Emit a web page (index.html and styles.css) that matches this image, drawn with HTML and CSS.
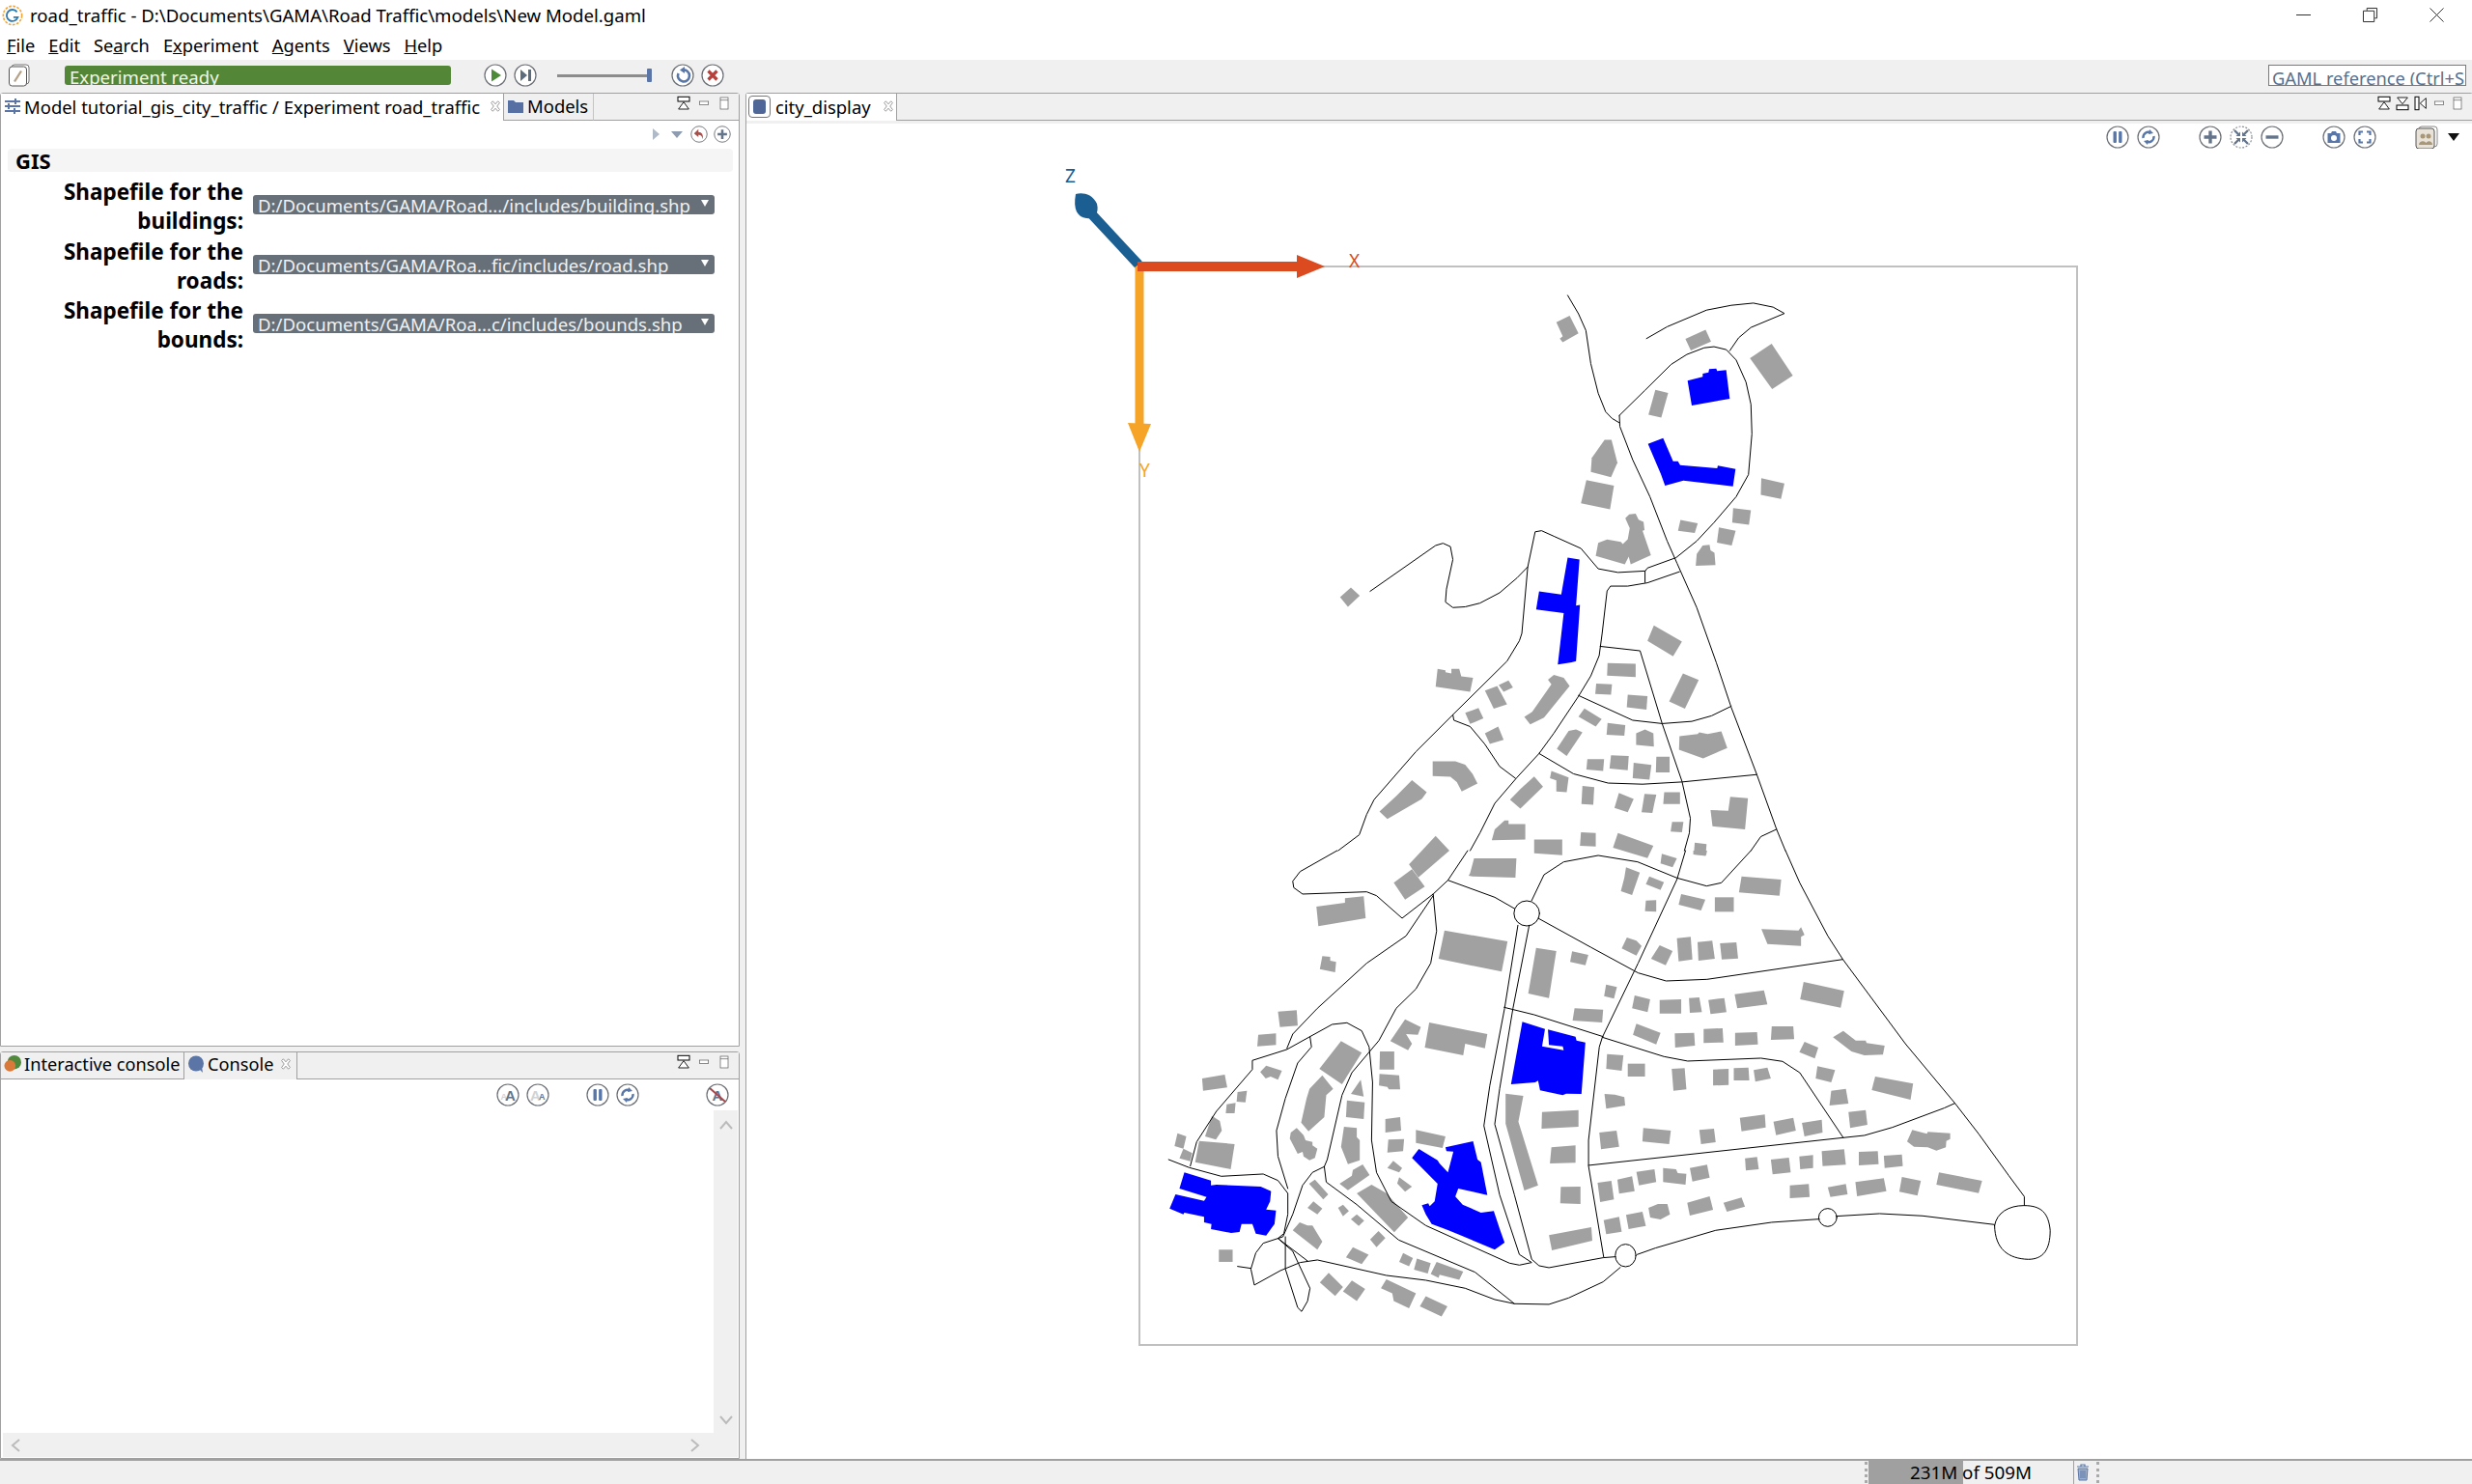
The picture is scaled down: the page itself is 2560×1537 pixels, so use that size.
FILE: index.html
```html
<!DOCTYPE html>
<html lang="en">
<head>
<meta charset="utf-8">
<title>road_traffic</title>
<link rel="stylesheet" href="styles.css">
</head>
<body>
<svg class="defs" aria-hidden="true">
  <symbol id="ring" viewBox="0 0 24 24"><circle cx="12" cy="12" r="11" fill="#fff" stroke="#6b6f75" stroke-width="1.2"/></symbol>
  <symbol id="i-play" viewBox="0 0 24 24"><use href="#ring"/><path d="M8 5.5 18 12 8 18.5z" fill="#4c8a38"/></symbol>
  <symbol id="i-step" viewBox="0 0 24 24"><use href="#ring"/><path d="M7 6 14 12 7 18z" fill="#5d6c7c"/><rect x="15" y="6" width="3" height="12" fill="#5d6c7c"/></symbol>
  <symbol id="i-reload" viewBox="0 0 24 24"><use href="#ring"/><path d="M7.5 10a6 6 0 1 0 4.5-3.5" fill="none" stroke="#5877a8" stroke-width="2.6"/><path d="M14 3v7l-5-3.500z" fill="#5877a8"/></symbol>
  <symbol id="i-stop" viewBox="0 0 24 24"><use href="#ring"/><path d="M7.500 7.500 16.500 16.500M16.500 7.500 7.500 16.500" stroke="#b8403a" stroke-width="3.200"/></symbol>
  <symbol id="i-pause" viewBox="0 0 24 24"><use href="#ring"/><rect x="7.500" y="6" width="3.400" height="12" rx="1" fill="#5877a8"/><rect x="13.100" y="6" width="3.400" height="12" rx="1" fill="#5877a8"/></symbol>
  <symbol id="i-sync" viewBox="0 0 24 24"><use href="#ring"/><path d="M6.500 13a5.500 5.500 0 0 1 8-5.500M17.500 11a5.500 5.500 0 0 1-8 5.500" fill="none" stroke="#5877a8" stroke-width="2.400"/><path d="M13 4l4 4-5 1zM11 20l-4-4 5-1z" fill="#5877a8"/></symbol>
  <symbol id="i-plus" viewBox="0 0 24 24"><use href="#ring"/><path d="M12 5.500v13M5.500 12h13" stroke="#64748a" stroke-width="3.400"/></symbol>
  <symbol id="i-minus" viewBox="0 0 24 24"><use href="#ring"/><path d="M5.500 12h13" stroke="#64748a" stroke-width="3.400"/></symbol>
  <symbol id="i-fit" viewBox="0 0 24 24"><circle cx="12" cy="12" r="11" fill="#fff" stroke="#8a8d92" stroke-width="1.200" stroke-dasharray="2 1.500"/><path d="M5 5l5 5M19 5l-5 5M5 19l5-5M19 19l-5-5" stroke="#64748a" stroke-width="2.400"/><path d="M11 11H6.500L11 6.500zM13 11h4.500L13 6.500zM11 13H6.500l4.500 4.500zM13 13h4.500L13 17.500z" fill="#64748a"/></symbol>
  <symbol id="i-cam" viewBox="0 0 24 24"><use href="#ring"/><path d="M5.500 8h3.500l1-2h4l1 2h3.500v10h-13z" fill="#5877a8"/><circle cx="12" cy="13" r="3" fill="#fff"/></symbol>
  <symbol id="i-full" viewBox="0 0 24 24"><use href="#ring"/><path d="M6.500 10V6.500H10M14 6.500h3.500V10M17.500 14v3.500H14M10 17.500H6.500V14" fill="none" stroke="#5877a8" stroke-width="2.200"/></symbol>
  <symbol id="v-min" viewBox="0 0 24 24"><rect x="5" y="9" width="14" height="5" fill="#fff" stroke="#555"/></symbol>
  <symbol id="v-max" viewBox="0 0 24 24"><rect x="6" y="3" width="12" height="18" fill="#fff" stroke="#555"/><path d="M6 7h12" stroke="#555"/></symbol>
  <symbol id="v-horiz" viewBox="0 0 24 24"><rect x="3" y="2" width="18" height="7" fill="#fff" stroke="#111" stroke-width="1.600"/><path d="M12 10 20 21H4z" fill="#fff" stroke="#111" stroke-width="1.400"/></symbol>
  <symbol id="v-horiz2" viewBox="0 0 24 24"><path d="M12 13 4 3h16z" fill="#fff" stroke="#111" stroke-width="1.400"/><rect x="3" y="15" width="18" height="7" fill="#fff" stroke="#111" stroke-width="1.600"/></symbol>
  <symbol id="v-vert" viewBox="0 0 24 24"><rect x="3" y="2" width="6" height="20" fill="#fff" stroke="#111" stroke-width="1.600"/><path d="M11 12 20 4v16z" fill="#fff" stroke="#111" stroke-width="1.400"/></symbol>
  <symbol id="i-close" viewBox="0 0 16 16"><path d="M3 4 5 2 8 5.500 11 2 13 4 10 8 13 12 11 14 8 10.500 5 14 3 12 6 8z" fill="#fff" stroke="#8a8a8a"/></symbol>
</svg>

<header class="titlebar">
  <svg class="logo" viewBox="0 0 24 24"><circle cx="12" cy="12" r="10.500" fill="none" stroke="#f2a73b" stroke-width="1.800" stroke-dasharray="3 1.500"/><path d="M17 8a6.500 6.500 0 1 0 1 6h-5" fill="none" stroke="#2d7bb0" stroke-width="2"/></svg>
  <span class="title-text">road_traffic - D:\Documents\GAMA\Road Traffic\models\New Model.gaml</span>
  <div class="win-controls">
    <svg viewBox="0 0 16 16"><path d="M0 8h16" stroke="#222"/></svg>
    <svg viewBox="0 0 16 16"><path d="M4.500 3V.500h11v11H13M.500 3.500h12v12H.500z" fill="none" stroke="#222"/></svg>
    <svg viewBox="0 0 16 16"><path d="M.500.500 15.500 15.500M15.500.500.500 15.500" stroke="#222"/></svg>
  </div>
</header>

<nav class="menubar">
  <span><u>F</u>ile</span><span><u>E</u>dit</span><span>Se<u>a</u>rch</span><span>E<u>x</u>periment</span><span><u>A</u>gents</span><span><u>V</u>iews</span><span><u>H</u>elp</span>
</nav>

<div class="toolbar">
  <svg class="tb-edit" viewBox="0 0 24 24"><rect x="4" y="1" width="18" height="20" rx="3" fill="#fff" stroke="#777"/><rect x="1.500" y="3" width="18" height="20" rx="3" fill="#fff" stroke="#555"/><path d="M6 18 13 7l2 1-7 11z" fill="#b5a288"/></svg>
  <div class="status-pill">Experiment ready</div>
  <div class="tb-group">
    <svg class="ic"><use href="#i-play"/></svg>
    <svg class="ic"><use href="#i-step"/></svg>
  </div>
  <div class="speed"><span class="speed-thumb"></span></div>
  <div class="tb-group">
    <svg class="ic"><use href="#i-reload"/></svg>
    <svg class="ic"><use href="#i-stop"/></svg>
  </div>
  <div class="search-box">GAML reference (Ctrl+S</div>
</div>

<main class="workspace">
  <div class="left-col">
    <section class="pane pane-params">
      <div class="tabbar">
        <div class="tab tab-active tab-params">
          <svg class="tab-ic" viewBox="0 0 18 18"><path d="M1 4h16M1 9h16M1 14h16" stroke="#5b76a6" stroke-width="2"/><path d="M12 1v6M5 6v6M11 11v6" stroke="#5b76a6" stroke-width="2"/></svg>
          <span>Model tutorial_gis_city_traffic / Experiment road_traffic</span>
          <svg class="tab-x"><use href="#i-close"/></svg>
        </div>
        <div class="tab tab-models">
          <svg class="tab-ic" viewBox="0 0 18 18"><path d="M1 3h6l2 2h8v11H1z" fill="#5670a3"/></svg>
          <span>Models</span>
        </div>
        <div class="view-ctl">
          <svg><use href="#v-horiz"/></svg><svg><use href="#v-min"/></svg><svg><use href="#v-max"/></svg>
        </div>
      </div>
      <div class="params-tools">
        <svg viewBox="0 0 16 16"><path d="M5 2l7 6-7 6z" fill="#b0bac6"/></svg>
        <svg viewBox="0 0 16 16"><path d="M2 5h12l-6 7z" fill="#8e9cb0"/></svg>
        <svg class="ic-sm" viewBox="0 0 24 24"><use href="#ring"/><path d="M11 5 5 11l6 5v-3c3 0 5 1 6 6 1-6-1-10-6-10z" fill="#a6504c"/></svg>
        <svg class="ic-sm" viewBox="0 0 24 24"><use href="#i-plus"/></svg>
      </div>
      <div class="section-head">GIS</div>
      <div class="form">
        <label>Shapefile for the buildings:</label>
        <div class="combo"><span>D:/Documents/GAMA/Road.../includes/building.shp</span><i></i></div>
        <label>Shapefile for the roads:</label>
        <div class="combo"><span>D:/Documents/GAMA/Roa...fic/includes/road.shp</span><i></i></div>
        <label>Shapefile for the bounds:</label>
        <div class="combo"><span>D:/Documents/GAMA/Roa...c/includes/bounds.shp</span><i></i></div>
      </div>
    </section>

    <section class="pane pane-console">
      <div class="tabbar">
        <div class="tab tab-inter">
          <svg class="tab-ic" viewBox="0 0 20 20"><circle cx="12" cy="8" r="8" fill="#4f8a3c"/><circle cx="7" cy="12" r="6.500" fill="#d9793a"/></svg>
          <span>Interactive console</span>
        </div>
        <div class="tab tab-console">
          <svg class="tab-ic" viewBox="0 0 18 18"><circle cx="9" cy="8.500" r="8" fill="#5b76a6"/><path d="M12 14l4 4-1-6z" fill="#5b76a6"/></svg>
          <span>Console</span>
          <svg class="tab-x"><use href="#i-close"/></svg>
        </div>
        <div class="view-ctl">
          <svg><use href="#v-horiz"/></svg><svg><use href="#v-min"/></svg><svg><use href="#v-max"/></svg>
        </div>
      </div>
      <div class="console-body">
        <div class="console-tools">
          <svg class="ic" viewBox="0 0 24 24"><use href="#ring"/><text x="4.500" y="17" class="ga ga-lt">A</text><text x="9" y="18" class="gb">A</text></svg>
          <svg class="ic gap-s" viewBox="0 0 24 24"><use href="#ring"/><text x="4" y="18" class="gb gb-lt">A</text><text x="13" y="17" class="ga">A</text></svg>
          <svg class="ic gap-m"><use href="#i-pause"/></svg>
          <svg class="ic gap-s"><use href="#i-sync"/></svg>
          <svg class="ic gap-l" viewBox="0 0 24 24"><use href="#ring"/><text x="6.500" y="18" class="gb">A</text><path d="M4 5 20 19" stroke="#a8464a" stroke-width="2"/></svg>
        </div>
        <div class="console-scrollarea">
          <div class="console-text"></div>
          <div class="vscroll">
            <svg viewBox="0 0 14 10"><path d="M1 9 7 2l6 7" fill="none" stroke="#bbb" stroke-width="2"/></svg>
            <svg viewBox="0 0 14 10"><path d="M1 1l6 7 6-7" fill="none" stroke="#bbb" stroke-width="2"/></svg>
          </div>
        </div>
        <div class="hscroll">
          <svg viewBox="0 0 10 14"><path d="M9 1 2 7l7 6" fill="none" stroke="#bbb" stroke-width="2"/></svg>
          <svg viewBox="0 0 10 14"><path d="M1 1l7 6-7 6" fill="none" stroke="#bbb" stroke-width="2"/></svg>
        </div>
      </div>
    </section>
  </div>

  <section class="pane pane-view">
    <div class="tabbar">
      <div class="tab tab-active tab-city">
        <span class="city-ic"><b></b></span>
        <span>city_display</span>
        <svg class="tab-x"><use href="#i-close"/></svg>
      </div>
      <div class="view-ctl view-ctl-5">
        <svg><use href="#v-horiz"/></svg><svg><use href="#v-horiz2"/></svg><svg><use href="#v-vert"/></svg><svg><use href="#v-min"/></svg><svg><use href="#v-max"/></svg>
      </div>
    </div>
    <div class="view-body">
      <div class="view-tools">
        <svg class="ic"><use href="#i-pause"/></svg>
        <svg class="ic t8"><use href="#i-sync"/></svg>
        <svg class="ic t30"><use href="#i-plus"/></svg>
        <svg class="ic t8"><use href="#i-fit"/></svg>
        <svg class="ic t8"><use href="#i-minus"/></svg>
        <svg class="ic t30"><use href="#i-cam"/></svg>
        <svg class="ic t8"><use href="#i-full"/></svg>
        <svg class="ic t30" viewBox="0 0 24 24"><rect x="4" y="1" width="19" height="21" rx="3" fill="#fff" stroke="#888"/><rect x="1" y="3" width="19" height="21" rx="3" fill="#e8e2d8" stroke="#555"/><circle cx="8" cy="11" r="2.500" fill="#a89878"/><circle cx="14" cy="11" r="2.500" fill="#a89878"/><path d="M4 20c0-5 8-5 8 0zM11 20c0-5 7-5 7 0z" fill="#a89878"/></svg>
        <svg class="drop" viewBox="0 0 12 8"><path d="M0 0h12L6 8z" fill="#111"/></svg>
      </div>
      <svg class="map" viewBox="773 127 1787 1384">
        <rect class="frame" x="1180" y="275" width="971" height="1117"/>

        <!-- upper part of the map -->
        <g transform="translate(1150 280) scale(.5102 .3827)">
          <g class="bld">
            <polygon points="905,138 932,120 950,168 918,192 912,182 918,176"/>
            <polygon points="1167,183 1208,158 1219,190 1178,214"/>
            <polygon points="1298,235 1342,196 1385,282 1343,319"/>
            <polygon points="1106,321 1132,329 1118,396 1092,388"/>
            <polygon points="1003,456 1017,456 1029,518 1016,557 975,543 977,505"/>
            <polygon points="966,565 1022,580 1014,644 955,628"/>
            <polygon points="1053,658 1066,656 1072,672 1082,678 1084,700 1080,702 1097,768 1056,793 1052,772 1044,793 985,770 990,735 1008,726 1036,732 1040,738 1050,725 1054,695 1045,668"/>
            <polygon points="1321,560 1368,574 1361,616 1320,605"/>
            <polygon points="1264,641 1300,647 1296,686 1262,680"/>
            <polygon points="1157,673 1192,682 1186,708 1152,702"/>
            <polygon points="1235,693 1269,702 1261,742 1231,734"/>
            <polygon points="1198,750 1202,742 1216,740 1218,755 1226,762 1228,795 1188,797 1190,765"/>
            <polygon points="466,882 488,856 506,878 482,908"/>
            <polygon points="1103,958 1160,1002 1142,1042 1090,1000"/>
            <polygon points="1162,1088 1194,1106 1166,1184 1134,1164"/>
            <polygon points="1009,1060 1066,1062 1066,1098 1008,1094"/>
            <polygon points="986,1116 1018,1118 1016,1146 984,1144"/>
            <polygon points="1050,1146 1090,1150 1088,1186 1048,1180"/>
            <polygon points="664,1076 680,1080 680,1085 692,1088 692,1076 708,1076 712,1096 736,1100 730,1138 660,1124"/>
            <polygon points="760,1135 785,1122 805,1172 778,1184"/>
            <polygon points="788,1120 808,1107 817,1126 798,1138"/>
            <polygon points="900,1092 920,1100 932,1122 880,1208 852,1226 840,1206 856,1192 895,1118 888,1105"/>
            <polygon points="720,1195 747,1182 757,1210 730,1225"/>
            <polygon points="760,1250 787,1232 798,1268 770,1279"/>
            <polygon points="962,1183 997,1212 985,1232 950,1205"/>
            <polygon points="1009,1222 1045,1228 1043,1257 1007,1254"/>
            <polygon points="1067,1250 1085,1240 1102,1250 1103,1286 1067,1282"/>
            <polygon points="930,1244 945,1240 958,1248 926,1312 906,1292"/>
            <polygon points="1155,1258 1192,1252 1195,1248 1212,1252 1240,1245 1252,1290 1203,1318 1154,1295"/>
            <polygon points="968,1320 1002,1320 1000,1352 966,1348"/>
            <polygon points="1016,1310 1052,1312 1050,1350 1013,1346"/>
            <polygon points="1062,1330 1098,1336 1094,1376 1060,1372"/>
            <polygon points="1108,1314 1135,1314 1135,1356 1107,1356"/>
            <polygon points="654,1326 700,1326 720,1335 735,1360 745,1386 713,1408 703,1382 690,1368 654,1366"/>
            <polygon points="612,1377 642,1410 632,1428 562,1482 546,1462 580,1420"/>
            <polygon points="895,1352 930,1370 926,1410 905,1408 905,1378 892,1372"/>
            <polygon points="860,1367 878,1395 832,1454 811,1430 833,1400"/>
            <polygon points="958,1393 982,1396 980,1444 956,1442"/>
            <polygon points="1032,1412 1062,1428 1050,1464 1023,1452"/>
            <polygon points="1084,1414 1108,1416 1104,1440 1100,1466 1078,1464"/>
            <polygon points="1124,1410 1156,1410 1156,1442 1122,1442"/>
            <polygon points="1218,1458 1254,1460 1258,1422 1294,1426 1288,1510 1222,1502"/>
            <polygon points="1140,1490 1163,1490 1160,1518 1137,1516"/>
            <polygon points="800,1486 808,1486 808,1496 842,1496 842,1538 774,1540 780,1510"/>
            <polygon points="860,1538 917,1538 917,1580 860,1575"/>
            <polygon points="955,1518 985,1520 985,1557 953,1555"/>
            <polygon points="1030,1520 1102,1555 1090,1588 1020,1560"/>
            <polygon points="1186,1546 1210,1550 1208,1582 1184,1578"/>
            <polygon points="660,1528 688,1568 625,1640 606,1605"/>
          </g>
          <g class="hi">
            <polygon points="928,775 952,780 945,905 953,903 945,1055 936,1058 908,1064 920,925 864,915 870,866 915,875"/>
          </g>
          <g class="road">
            <polyline points="928,65 950,115 965,160 975,250 990,330 1005,380 1018,398 1033,410"/>
            <polyline points="1033,390 1085,322 1138,252 1170,225 1205,207 1225,204 1250,212 1270,240 1290,300 1300,360 1302,440 1295,550 1270,610 1225,680 1190,730 1148,775 1090,803 1085,812 1085,842"/>
            <polyline points="1033,390 1034,420 1060,510 1095,610 1130,730 1150,790 1190,910 1230,1060 1260,1180 1312,1362 1352,1510 1370,1568"/>
            <polyline points="1088,182 1130,150 1210,105 1260,92 1305,86 1345,97 1368,114 1300,152 1275,180 1257,215"/>
            <polyline points="527,866 660,742 675,736 690,745 695,780 682,860 680,895 695,910 720,908 750,898 790,870 825,830 847,800"/>
            <polyline points="1085,811 1030,815 990,805 955,750 900,717 875,702 862,705 847,800 835,980 830,1000 805,1055 695,1200 620,1300 535,1430 520,1470 505,1525 462,1568"/>
            <polyline points="1155,813 1090,843 1050,852 1015,852 1008,865 998,980 992,1040 975,1095 950,1150 900,1250 870,1305 825,1370 780,1440 750,1520 730,1568"/>
            <polyline points="994,1015 1075,1027 1120,1225 1160,1380 1177,1480 1175,1520 1165,1568"/>
            <polyline points="950,1148 1060,1215 1120,1224 1180,1218 1220,1203 1260,1177"/>
            <polyline points="870,1305 940,1360 1010,1385 1080,1388 1160,1382 1312,1362"/>
            <polyline points="695,1200 697,1215 730,1232 760,1280 790,1340 822,1372"/>
            <polyline points="1352,1510 1320,1530 1300,1568"/>
          </g>
        </g>

        <!-- top-right blue buildings -->
        <g transform="translate(1600 280) scale(.3333)">
          <g class="hi">
            <polygon points="443,340 490,328 490,318 508,314 510,304 532,302 535,310 563,307 574,396 456,417"/>
            <polygon points="320,536 367,518 398,590 413,590 420,602 535,612 537,604 592,614 584,668 430,650 373,666 360,630"/>
          </g>
        </g>

        <!-- lower left part -->
        <g transform="translate(1150 880) scale(.5102 .3333)">
          <g class="bld">
            <polygon points="738,24 824,24 822,84 735,80 727,78 730,70"/>
            <polygon points="575,100 612,58 638,112 598,152"/>
            <polygon points="418,174 476,162 476,148 514,142 518,210 486,218 422,235"/>
            <polygon points="430,328 446,330 446,342 458,346 456,378 425,368"/>
            <polygon points="678,248 806,282 794,376 666,336"/>
            <polygon points="864,302 905,312 890,458 848,444"/>
            <polygon points="937,313 970,324 964,356 933,346"/>
            <polygon points="1006,416 1028,424 1022,460 1002,452"/>
            <polygon points="942,490 1000,494 998,534 938,528"/>
            <polygon points="340,500 378,496 380,544 344,548"/>
            <polygon points="300,572 336,568 336,604 298,608"/>
            <polygon points="598,524 630,548 624,572 600,570 612,600 604,620 568,592"/>
            <polygon points="647,534 765,570 760,614 720,600 716,636 638,612"/>
            <polygon points="547,624 576,624 576,680 546,680"/>
            <polygon points="546,694 586,698 588,742 565,742 562,734 545,730"/>
            <polygon points="304,688 316,668 348,684 340,712 325,702 315,708"/>
            <polygon points="186,708 232,696 237,736 188,746"/>
            <polygon points="468,592 510,628 470,726 424,678"/>
            <polygon points="430,698 452,740 438,760 434,828 402,872 387,845 398,770 404,740"/>
            <polygon points="508,712 514,764 488,756"/>
            <polygon points="480,776 516,782 514,834 478,828"/>
            <polygon points="258,750 277,746 274,782 256,780"/>
            <polygon points="236,788 254,784 252,816 234,816"/>
            <polygon points="206,824 222,840 226,870 214,898 192,888"/>
            <polygon points="136,878 154,888 148,926 130,918"/>
            <polygon points="148,926 166,940 162,965 140,956"/>
            <polygon points="180,902 252,912 244,990 172,968"/>
            <polygon points="366,876 378,862 392,884 396,900 410,905 410,916 420,926 415,955 404,962 392,950 390,936 380,942 364,895"/>
            <polygon points="474,858 500,862 500,890 506,900 506,962 482,974 468,920"/>
            <polygon points="558,834 588,828 590,870 558,876"/>
            <polygon points="564,898 596,896 594,934 562,938"/>
            <polygon points="620,868 680,888 674,924 620,908"/>
            <polygon points="574,964 592,986 586,1000 562,986"/>
            <polygon points="492,992 512,975 526,1008 482,1055 465,1035 490,1010"/>
            <polygon points="586,1015 612,1044 598,1060 582,1034"/>
            <polygon points="403,1035 415,1022 442,1068 432,1084"/>
            <polygon points="400,1110 412,1090 430,1112 420,1130"/>
            <polygon points="462,1110 472,1100 484,1120 472,1136"/>
            <polygon points="488,1145 500,1130 515,1150 504,1166"/>
            <polygon points="530,1038 560,1064 604,1140 576,1186 500,1065"/>
            <polygon points="370,1180 384,1155 400,1165 410,1165 430,1215 420,1240"/>
            <polygon points="220,1240 248,1240 248,1278 220,1278"/>
            <polygon points="527,1208 544,1182 558,1204 540,1232"/>
            <polygon points="492,1232 524,1256 510,1285 478,1264"/>
            <polygon points="594,1250 614,1266 606,1292 586,1278"/>
            <polygon points="622,1268 650,1282 644,1314 616,1302"/>
            <polygon points="662,1278 716,1308 708,1334 668,1318 666,1328 650,1316"/>
            <polygon points="443,1312 472,1356 456,1384 425,1342"/>
            <polygon points="490,1336 517,1362 500,1400 472,1370"/>
            <polygon points="560,1332 620,1376 606,1422 575,1400 572,1376 549,1360"/>
            <polygon points="640,1385 684,1416 672,1448 628,1416"/>
            <polygon points="802,755 838,762 828,842 868,1040 840,1056 802,848"/>
            <polygon points="876,812 950,806 950,858 875,864"/>
            <polygon points="895,922 944,916 944,970 892,972"/>
            <polygon points="914,1045 954,1044 954,1098 913,1096"/>
            <polygon points="890,1195 976,1170 978,1212 896,1242"/>
          </g>
          <g class="hi">
            <polygon points="150,1000 204,1025 204,1040 215,1038 305,1044 326,1058 324,1090 316,1115 336,1118 333,1160 316,1196 295,1190 288,1160 266,1160 262,1185 245,1188 204,1176 205,1160 190,1155 190,1138 150,1125 148,1130 120,1112 132,1068 190,1088 195,1076 140,1050"/>
            <polygon points="626,927 664,962 668,972 685,1000 696,935 682,934 680,922 736,903 745,960 752,968 765,1070 758,1068 706,1050 700,1075 715,1100 752,1125 778,1120 790,1175 800,1218 780,1240 710,1195 686,1180 652,1160 640,1130 632,1102 645,1096 648,1105 658,1090 664,1035 612,955"/>
            <polygon points="836,532 882,554 876,608 920,620 918,608 890,604 888,556 944,578 946,590 964,596 956,756 925,755 918,760 872,745 868,715 862,720 813,726"/>
          </g>
          <g class="road">
            <polyline points="460,0 385,65 370,95 372,115 390,135 520,128 540,140 592,210 655,135 685,92 725,0"/>
            <polyline points="685,92 780,145 820,180"/>
            <ellipse cx="845" cy="195" rx="26" ry="39"/>
            <polyline points="855,155 880,75 920,35 990,15 1070,35 1150,85 1210,110 1240,100 1300,0"/>
            <polyline points="827,232 800,490 770,730 758,855 790,1070 830,1255 855,1280 830,1288 810,1282 640,1165 570,1090 540,1000 530,900 532,720 525,610 510,560 480,535 450,540 405,578 358,618 288,652 288,680 215,810 175,905 162,980"/>
            <polyline points="850,232 817,490 790,740 780,850 820,1070 855,1270 870,1290 890,1296 1000,1265 1025,1262"/>
            <polyline points="799,487 860,510 1000,578"/>
            <polyline points="655,135 662,250 650,350 620,430 580,490 545,590 490,690 470,760 440,960 434,982 410,1000 390,1040 370,1130 350,1200 310,1220 295,1250 285,1300 292,1350 345,1305 385,1280 420,1272 560,1320 640,1335 720,1360 780,1395 820,1408 890,1410 930,1390 1000,1340 1035,1295"/>
            <polyline points="655,140 600,265 520,350 420,490 370,570 358,615"/>
            <polyline points="405,578 408,610 380,660 355,770 337,870 340,950 360,1050"/>
            <polyline points="118,960 160,985 225,1012 310,1005 340,1025 360,1065 360,1130 352,1190 340,1205 370,1245 405,1360 400,1400 388,1432 380,1420 355,1300 355,1200"/>
            <polyline points="340,1205 400,1275"/>
            <polyline points="434,982 438,1030 500,1100 585,1210 740,1310 820,1408"/>
            <polyline points="258,1292 285,1298"/>
          </g>
        </g>

        <!-- lower right part -->
        <g transform="translate(1500 880) scale(.4464 .3333)">
          <g class="bld">
            <polygon points="412,52 444,68 426,138 400,126 408,85"/>
            <polygon points="466,80 500,98 492,122 458,104"/>
            <polygon points="458,155 482,154 482,190 456,188"/>
            <polygon points="495,10 530,24 520,52 492,40"/>
            <polygon points="568,0 600,0 598,14 568,12"/>
            <polygon points="680,80 772,90 768,140 674,130"/>
            <polygon points="540,135 596,152 586,186 534,168"/>
            <polygon points="618,145 662,145 662,190 618,190"/>
            <polygon points="726,244 812,248 818,238 826,262 818,268 818,296 740,290"/>
            <polygon points="414,270 436,280 448,296 436,326 402,304"/>
            <polygon points="490,294 520,312 504,356 470,336"/>
            <polygon points="530,272 562,268 566,338 534,344"/>
            <polygon points="578,284 612,280 618,336 580,342"/>
            <polygon points="630,288 668,285 672,335 634,338"/>
            <polygon points="432,450 468,462 462,502 426,490"/>
            <polygon points="490,464 540,462 540,506 490,506"/>
            <polygon points="558,458 582,456 588,502 560,504"/>
            <polygon points="603,464 640,458 645,502 608,508"/>
            <polygon points="664,446 732,434 740,478 670,490"/>
            <polygon points="824,408 918,436 910,488 816,462"/>
            <polygon points="436,538 492,566 482,602 428,572"/>
            <polygon points="525,568 570,566 572,606 526,612"/>
            <polygon points="592,554 636,552 638,596 592,598"/>
            <polygon points="665,566 716,564 718,602 665,606"/>
            <polygon points="750,546 800,546 802,586 748,588"/>
            <polygon points="826,594 858,612 850,646 814,626"/>
            <polygon points="892,580 916,560 945,590 968,590 970,598 1012,606 1008,634 965,636 935,624"/>
            <polygon points="856,670 897,682 888,720 852,708"/>
            <polygon points="990,702 1078,724 1072,774 982,744"/>
            <polygon points="888,746 922,740 928,786 884,792"/>
            <polygon points="928,812 968,806 972,852 932,862"/>
            <polygon points="368,632 406,636 402,684 366,678"/>
            <polygon points="416,662 456,662 456,702 416,702"/>
            <polygon points="518,678 548,676 552,742 522,746"/>
            <polygon points="614,680 650,678 650,728 614,730"/>
            <polygon points="662,676 696,674 698,714 662,714"/>
            <polygon points="708,682 740,674 748,708 712,718"/>
            <polygon points="362,756 386,758 408,766 410,792 366,802"/>
            <polygon points="350,876 390,870 396,920 354,928"/>
            <polygon points="452,862 516,870 512,912 450,904"/>
            <polygon points="582,868 616,864 620,906 586,912"/>
            <polygon points="676,830 734,820 736,860 680,872"/>
            <polygon points="754,842 800,830 806,870 760,884"/>
            <polygon points="820,846 866,836 868,876 826,888"/>
            <polygon points="1076,868 1110,880 1112,874 1164,878 1164,896 1155,902 1154,922 1132,932 1112,922 1080,920 1064,904"/>
            <polygon points="688,956 716,952 720,990 690,994"/>
            <polygon points="748,960 790,954 794,1000 752,1006"/>
            <polygon points="814,950 846,946 846,986 816,990"/>
            <polygon points="866,934 918,928 922,976 868,980"/>
            <polygon points="952,936 996,934 998,974 952,978"/>
            <polygon points="1010,948 1052,944 1054,980 1012,986"/>
            <polygon points="792,1040 836,1036 838,1076 792,1080"/>
            <polygon points="880,1046 922,1036 926,1068 886,1076"/>
            <polygon points="944,1030 1010,1018 1016,1058 948,1074"/>
            <polygon points="1052,1014 1096,1026 1088,1072 1046,1060"/>
            <polygon points="1138,1000 1238,1026 1230,1064 1132,1038"/>
            <polygon points="346,1032 378,1026 384,1084 352,1092"/>
            <polygon points="392,1022 426,1012 432,1058 396,1066"/>
            <polygon points="436,998 478,990 482,1030 442,1040"/>
            <polygon points="498,986 528,990 532,1002 552,1004 550,1038 498,1030"/>
            <polygon points="560,986 600,976 606,1016 566,1028"/>
            <polygon points="360,1148 396,1138 402,1184 366,1192"/>
            <polygon points="412,1132 450,1122 458,1166 418,1176"/>
            <polygon points="464,1110 486,1098 508,1098 514,1130 492,1146 468,1140"/>
            <polygon points="554,1094 606,1074 614,1116 560,1134"/>
            <polygon points="638,1094 680,1078 688,1106 646,1122"/>
          </g>
          <g class="road">
            <polyline points="782,0 815,100 880,265 915,338 1060,600 1175,785 1230,880 1300,1010 1336,1075 1336,1102"/>
            <polyline points="208,210 330,300 440,380 505,405 600,400 915,338"/>
            <polyline points="550,0 530,90 440,350 357,580 350,610 325,900 325,980 360,1262"/>
            <polyline points="357,580 500,640 555,654 725,645 775,655 815,690 916,892"/>
            <polyline points="325,978 916,892 965,885 1030,860 1150,800 1175,785"/>
            <polyline points="438,1255 480,1235 620,1180 750,1155 860,1145"/>
            <ellipse cx="880" cy="1140" rx="21" ry="28"/>
            <polyline points="900,1136 1000,1128 1100,1135 1266,1162"/>
            <path d="M1267 1165C1272 1125 1300 1103 1335 1103 1375 1103 1392 1125 1396 1180 1396 1240 1380 1270 1345 1270 1300 1268 1268 1240 1267 1165z"/>
            <ellipse cx="411" cy="1258" rx="24" ry="35"/>
          </g>
        </g>

        <!-- axes -->
        <g class="axes">
          <path class="ax-z" d="M1179 273 1127 217"/>
          <path class="ax-ball" d="M1114 200C1120 198 1131 199 1136 210 1139 222 1131 226 1125 225 1116 224 1111 216 1114 200z"/>
          <path class="ax-y" d="M1180 275V440"/>
          <path class="ax-yh" d="M1168 437 1192 438 1180 467z"/>
          <path class="ax-x" d="M1178 275H1345"/>
          <path class="ax-xh" d="M1343 263 1372 275 1343 287z"/>
          <text class="lbl-z" x="1103" y="188">Z</text>
          <text class="lbl-x" x="1397" y="276">X</text>
          <text class="lbl-y" x="1180" y="493">Y</text>
        </g>
      </svg>
    </div>
  </section>
</main>

<footer class="statusbar">
  <div class="grip"></div>
  <div class="heap"><span class="heap-fill"></span><span class="heap-text">231M of 509M</span></div>
  <svg class="trash" viewBox="0 0 14 18"><path d="M1 3h12M5 3V1h4v2" fill="none" stroke="#5b76a6" stroke-width="1.200"/><path d="M2 5h10l-1 12H3z" fill="#9db0cc" stroke="#5b76a6"/><path d="M5 7v8M7 7v8M9 7v8" stroke="#5b76a6"/></svg>
  <div class="grip"></div>
</footer>
</body>
</html>
```

FILE: styles.css
```css
* { box-sizing: border-box; }
html, body { margin: 0; padding: 0; }
body {
  width: 2560px;
  height: 1537px;
  overflow: hidden;
  display: flex;
  flex-direction: column;
  background: #f0f0f0;
  color: #000;
  font-family: "Noto Sans", "Open Sans", sans-serif;
  font-size: 18.3px;
}
.defs { position: absolute; width: 0; height: 0; overflow: hidden; }
.ga { font: 700 9px "Liberation Sans", sans-serif; fill: #64748a; }
.ga-lt { fill: #d0d3d8; }
.gb { font: 700 15px "Liberation Sans", sans-serif; fill: #64748a; }
.gb-lt { fill: #d0d3d8; }

.titlebar { height: 31px; background: #fff; display: flex; align-items: center; padding-left: 2px; }
.logo { width: 22px; height: 24px; margin-right: 7px; flex: none; }
.title-text { font-size: 18.6px; white-space: nowrap; }
.win-controls { margin-left: auto; display: flex; gap: 54px; padding-right: 29px; padding-bottom: 1px; }
.win-controls svg { width: 15px; height: 15px; overflow: visible; }

.menubar { height: 31px; background: #fff; display: flex; align-items: center; padding-left: 7px; gap: 14px; font-size: 18.3px; }

.toolbar { height: 34px; display: flex; align-items: center; padding-left: 8px; padding-bottom: 2px; }
.tb-edit { width: 24px; height: 24px; flex: none; }
.status-pill {
  width: 400px; height: 20px; margin-left: 35px;
  background: #548637; color: #f0f5e8; border-radius: 3px;
  padding-left: 5px; line-height: 24px; overflow: hidden; white-space: nowrap; font-size: 18.6px;
}
.tb-group { display: flex; gap: 7px; margin-left: 34px; }
.ic { width: 24px; height: 24px; flex: none; }
.speed { position: relative; width: 98px; height: 3px; background: #8c8c8c; margin-left: 21px; }
.speed-thumb { position: absolute; right: 0; top: -6px; width: 5px; height: 14px; background: #5b76a6; border-radius: 1px; }
.speed + .tb-group { margin-left: 20px; }
.search-box {
  margin-left: auto; margin-right: 6px; width: 205px; height: 22px;
  background: #fff; border: 1px solid #7a7a7a; color: #56708f;
  padding-left: 3px; line-height: 25px; overflow: hidden; white-space: nowrap; font-size: 18.3px;
}

.workspace { flex: 1; display: flex; min-height: 0; }
.left-col { width: 766px; display: flex; flex-direction: column; gap: 5px; flex: none; }
.pane {
  background: #fff; border: 1px solid #a0a0a0; border-radius: 3px 3px 0 0;
  display: flex; flex-direction: column; min-height: 0;
}
.pane-params { height: 988px; }
.pane-console { flex: 1; }
.pane-view { flex: 1; margin-left: 6px; border-bottom: 0; }

.tabbar { height: 28px; flex: none; display: flex; background: #f0f0f0; border-bottom: 1px solid #a0a0a0; position: relative; }
.tab { display: flex; align-items: center; height: 28px; white-space: nowrap; gap: 3px; padding-bottom: 2px; font-size: 18.45px; }
.tab-ic { width: 18px; height: 18px; flex: none; margin-left: 3px; }
.tab-x { width: 14px; height: 14px; flex: none; margin-left: 6px; }
.tab-active { background: #fff; border-right: 1px solid #a0a0a0; }
.tab-params { width: 521px; }
.tab-models { width: 93px; border-right: 1px solid #c4c4c4; border-bottom: 1px solid #a0a0a0; background: #f0f0f0; }
.tab-inter { width: 190px; border-right: 1px solid #a0a0a0; padding-bottom: 4px; font-size: 18.2px; }
.tab-console { width: 117px; border-right: 1px solid #a0a0a0; background: #f0f0f0; padding-bottom: 4px; font-size: 18.2px; }
.tab-console .tab-x { margin-left: 3px; }
.tab-city { width: 156px; padding-left: 2px; gap: 5px; }
.city-ic { width: 23px; height: 23px; border: 1px solid #777; border-radius: 4px; background: #fff; display: flex; align-items: center; justify-content: center; flex: none; }
.city-ic b { width: 13px; height: 15px; background: #4f6797; border-radius: 3px; }
.view-ctl { margin-left: auto; display: flex; gap: 5px; padding: 1px 7px 0 0; align-items: flex-start; }
.view-ctl svg { width: 16px; height: 18px; }
.view-ctl-5 { gap: 3px; }

.params-tools { display: flex; justify-content: flex-end; align-items: center; gap: 6px; height: 28px; padding-right: 8px; }
.params-tools svg { width: 16px; height: 16px; }
.params-tools .ic-sm { width: 18px; height: 18px; }
.section-head {
  margin: 1px 6px 0 7px; height: 24px; background: #f5f5f5; border-radius: 4px;
  font-weight: 700; font-size: 22px; line-height: 24px; padding-left: 8px;
}
.form {
  display: grid; grid-template-columns: 251px 478px; grid-auto-rows: 61.5px; column-gap: 10px;
  padding-top: 6px;
}
.form label { font-weight: 700; font-size: 22.5px; line-height: 30px; text-align: right; padding-left: 50px; }
.combo {
  height: 20px; margin-top: 18px; background: #677079; color: #eef0f2; border-radius: 3px;
  display: flex; padding-left: 5px; position: relative; overflow: hidden; line-height: 22px; white-space: nowrap; font-size: 18.6px;
}
.combo i { position: absolute; right: 6px; top: 5px; width: 0; height: 0; border-left: 4px solid transparent; border-right: 4px solid transparent; border-top: 7px solid #fff; }

.console-body { flex: 1; display: flex; flex-direction: column; min-height: 0; padding: 0 1px 1px 2px; position: relative; }
.console-tools { height: 32px; display: flex; align-items: center; padding-left: 511px; padding-bottom: 1px; flex: none; }
.gap-s { margin-left: 7px; }
.gap-m { margin-left: 38px; }
.gap-l { margin-left: 69px; }
.console-scrollarea { flex: 1; display: flex; min-height: 0; }
.console-text { flex: 1; background: #fff; }
.vscroll { width: 25px; background: #f0f0f0; display: flex; flex-direction: column; justify-content: space-between; align-items: center; padding: 10px 0 8px; }
.vscroll svg { width: 14px; height: 10px; }
.hscroll { height: 25px; background: #f0f0f0; display: flex; justify-content: space-between; align-items: center; padding: 0 39px 0 8px; flex: none; }
.hscroll svg { width: 10px; height: 14px; }

.view-body { flex: 1; position: relative; min-height: 0; border-top: 3px solid #f0f0f0; }
.view-tools { position: absolute; top: 2px; right: 13px; display: flex; align-items: center; }
.t8 { margin-left: 8px; }
.t30 { margin-left: 40px; }
.drop { width: 12px; height: 8px; margin-left: 10px; }
.map { display: block; width: 1787px; height: 1384px; }

.frame { fill: #fff; stroke: #c0c0c0; stroke-width: 2; }
.bld polygon { fill: #a1a1a1; }
.hi polygon { fill: #0000ff; }
.road polyline, .road ellipse, .road path {
  fill: none; stroke: #000; stroke-width: 1; stroke-linejoin: round; stroke-linecap: round;
  vector-effect: non-scaling-stroke;
}
.ax-z { stroke: #1a5e92; stroke-width: 10; fill: none; }
.ax-ball { fill: #1a5e92; }
.ax-y { stroke: #f5a428; stroke-width: 9; fill: none; }
.ax-yh { fill: #f5a428; }
.ax-x { stroke: #dc4a20; stroke-width: 10; fill: none; }
.ax-xh { fill: #dc4a20; }
.axes text { font-family: "Noto Sans", sans-serif; font-size: 19px; }
.lbl-z { fill: #1a5e92; }
.lbl-x { fill: #dc4a20; }
.lbl-y { fill: #f5a428; }

.statusbar { height: 26px; flex: none; border-top: 2px solid #a0a0a0; display: flex; align-items: center; padding-left: 1931px; }
.grip { width: 3px; height: 22px; border-left: 3px dotted #aaa; flex: none; }
.heap { position: relative; width: 213px; height: 24px; margin-left: 1px; border-right: 1px solid #a0a0a0; line-height: 24px; text-align: center; font-size: 18.8px; }
.heap-fill { position: absolute; left: 0; top: 0; bottom: 0; width: 98px; background: #a0a0a0; }
.heap-text { position: relative; }
.trash { width: 14px; height: 18px; margin: 0 7px 0 2px; flex: none; }
```
